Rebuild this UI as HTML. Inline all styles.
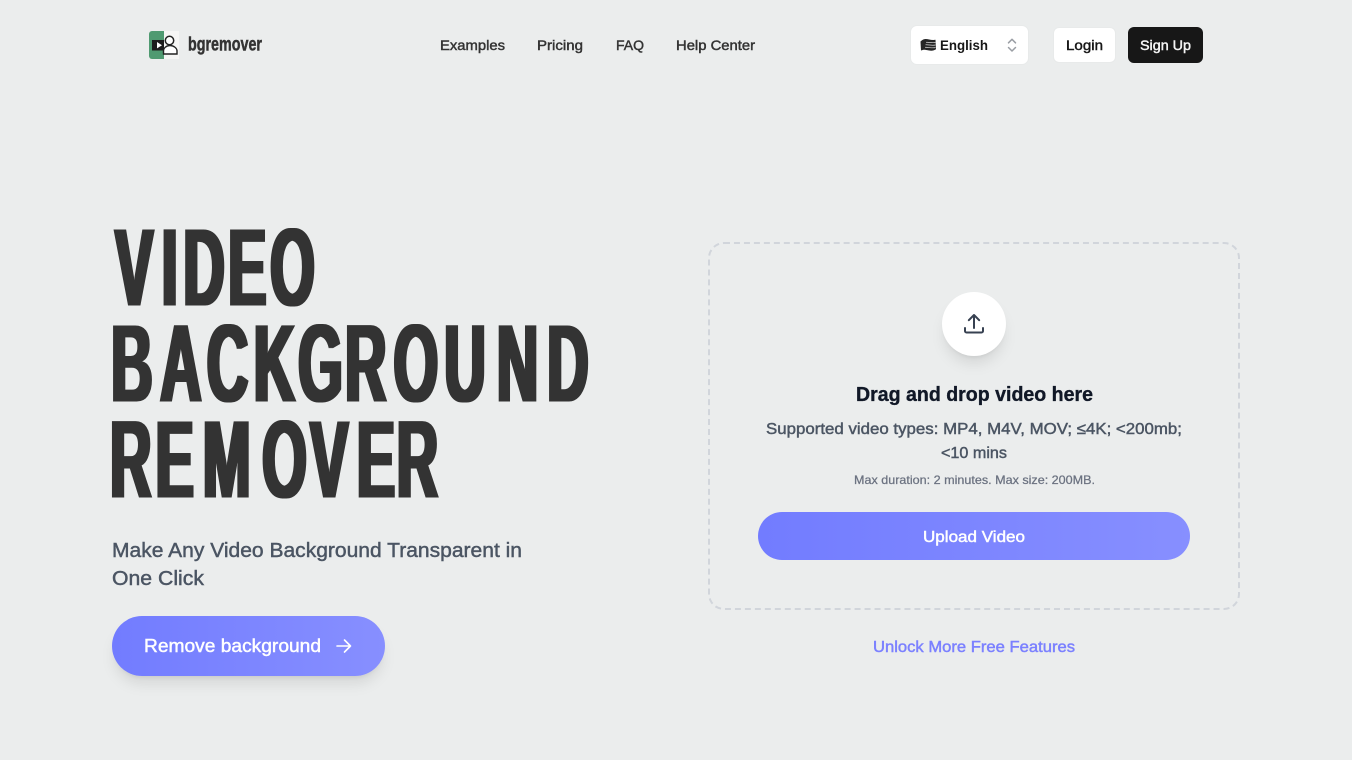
<!DOCTYPE html>
<html lang="en">
<head>
<meta charset="utf-8">
<title>bgremover - Video Background Remover</title>
<style>
html,body{margin:0;padding:0;width:1352px;height:760px;overflow:hidden;background:#ebeded}
body{position:relative;font-family:"Liberation Sans",sans-serif}
.box{position:absolute;box-sizing:border-box}
#lang{left:910px;top:25px;width:119px;height:40px;background:#fff;border:1px solid #e8eaea;border-radius:7px}
#login{left:1053px;top:27px;width:63px;height:36px;background:#fff;border:1px solid #e8eaea;border-radius:6px}
#signup{left:1128px;top:27px;width:75px;height:36px;background:#171717;border-radius:6px}
#drop{left:708px;top:242px;width:532px;height:368px;border:2px dashed #d1d5db;border-radius:16px}
#circle{left:942px;top:292px;width:64px;height:64px;background:#fff;border-radius:50%;box-shadow:0 10px 15px -3px rgba(0,0,0,.1),0 4px 6px -4px rgba(0,0,0,.1)}
#upload{left:758px;top:512px;width:432px;height:48px;border-radius:24px;background:linear-gradient(90deg,#727cff,#878fff)}
#remove{left:112px;top:616px;width:273px;height:60px;border-radius:30px;background:linear-gradient(90deg,#727cff,#878fff);box-shadow:0 10px 15px -3px rgba(0,0,0,.1),0 4px 6px -4px rgba(0,0,0,.1)}
svg{position:absolute;left:0;top:0}
text{font-family:"Liberation Sans",sans-serif}
.m{stroke-width:.45px}
</style>
</head>
<body>
<div class="box" id="lang"></div>
<div class="box" id="login"></div>
<div class="box" id="signup"></div>
<div class="box" id="drop"></div>
<div class="box" id="circle"></div>
<div class="box" id="upload"></div>
<div class="box" id="remove"></div>
<svg width="1352" height="760" viewBox="0 0 1352 760" xmlns="http://www.w3.org/2000/svg">
  <defs>
    <filter id="wide" filterUnits="userSpaceOnUse" x="100" y="210" width="510" height="300" color-interpolation-filters="sRGB">
      <feMorphology operator="dilate" radius="2 0"/>
    </filter>
  </defs>
  <!-- logo -->
  <rect x="163" y="31" width="16" height="28" fill="#f6f6f5"/>
  <path d="M152 31h12v28h-12a3 3 0 0 1-3-3V34a3 3 0 0 1 3-3z" fill="#4f9a71"/>
  <rect x="152" y="40" width="12" height="10.500" fill="#1c1c1c"/>
  <path d="M157 42l5 3.200-5 3.200z" fill="#fff"/>
  <path d="M163.500 54v-3c0-3 3-5.500 6.500-5.500s7 2.500 7 5.500v3z" fill="#fff" stroke="#222" stroke-width="1.400"/>
  <circle cx="169.500" cy="40.500" r="4.200" fill="#fff" stroke="#222" stroke-width="1.500"/>
  <text x="188" y="50.500" font-size="19.500" font-weight="700" fill="#333" stroke="#333" stroke-width=".5" textLength="74" lengthAdjust="spacingAndGlyphs">bgremover</text>

  <!-- nav -->
  <g font-size="14" fill="#333" stroke="#333">
    <text class="m" x="440" y="50" textLength="65" lengthAdjust="spacingAndGlyphs">Examples</text>
    <text class="m" x="537" y="50" textLength="46" lengthAdjust="spacingAndGlyphs">Pricing</text>
    <text class="m" x="616" y="50" textLength="28" lengthAdjust="spacingAndGlyphs">FAQ</text>
    <text class="m" x="676" y="50" textLength="79" lengthAdjust="spacingAndGlyphs">Help Center</text>
  </g>

  <!-- language -->
  <path d="M920.500 41.500c1-1 3-2.500 5-2.500 3 0 6 1.500 10 .8l.5 9.500c-3 2-6 1.500-9 .8s-4-.3-6 .4z" fill="#262626"/>
  <path d="M926 42.300c3-.2 6 .8 9.500.2M925.500 44.800c3.500-.2 6 1 10 .2M925 47.300c3.500-.2 6 1 10.500.3" stroke="#d8d8d8" stroke-width=".7" fill="none"/>
  <text x="940" y="50" font-size="14" font-weight="700" fill="#171717" textLength="48" lengthAdjust="spacingAndGlyphs">English</text>
  <path d="M1008.500 42.800l3.500-3.500 3.500 3.500M1008.500 47.500l3.500 3.500 3.500-3.500" fill="none" stroke="#9a9ea4" stroke-width="1.500" stroke-linecap="round" stroke-linejoin="round"/>

  <text x="1066" y="50" font-size="14" fill="#171717" stroke="#171717" class="m" textLength="37" lengthAdjust="spacingAndGlyphs">Login</text>
  <text x="1140" y="50" font-size="14" fill="#f5f5f5" stroke="#f5f5f5" class="m" textLength="51" lengthAdjust="spacingAndGlyphs">Sign Up</text>

  <!-- heading -->
  <g filter="url(#wide)">
    <g font-size="110" font-weight="700" fill="#333" transform="scale(.52 1)">
      <text x="221.3 311.1 352.7 438.9 519.7" y="305.500">VIDEO</text>
      <text x="213.9 308.1 397.9 488 573.6 663.6 756.9 854.5 955.5 1052.3" y="401.500">BACKGROUND</text>
      <text x="211.7 299.2 390.1 504.3 596.3 686.3 763" y="497.500">REMOVER</text>
    </g>
  </g>

  <g font-size="20" fill="#4b5563" stroke="#4b5563">
    <text class="m" x="112" y="557" textLength="410" lengthAdjust="spacingAndGlyphs">Make Any Video Background Transparent in</text>
    <text class="m" x="112" y="585" textLength="92" lengthAdjust="spacingAndGlyphs">One Click</text>
  </g>

  <text class="m" x="144" y="652" font-size="18" fill="#fff" stroke="#fff" textLength="177" lengthAdjust="spacingAndGlyphs">Remove background</text>
  <path d="M337 646h13.500M344.500 640l6 6-6 6" fill="none" stroke="#fff" stroke-width="1.600" stroke-linecap="round" stroke-linejoin="round"/>

  <!-- upload icon -->
  <path d="M974 328V315M968.800 320.200l5.200-5.200 5.200 5.200M965 328v3a1.500 1.500 0 0 0 1.500 1.500h15a1.500 1.500 0 0 0 1.500-1.500v-3" fill="none" stroke="#374151" stroke-width="2" stroke-linecap="round" stroke-linejoin="round"/>

  <text x="856" y="401" font-size="20" font-weight="700" fill="#111827" stroke="#111827" stroke-width=".35" textLength="237" lengthAdjust="spacingAndGlyphs">Drag and drop video here</text>
  <g font-size="16" fill="#4b5563" stroke="#4b5563">
    <text class="m" x="766" y="434" textLength="416" lengthAdjust="spacingAndGlyphs">Supported video types: MP4, M4V, MOV; ≤4K; &lt;200mb;</text>
    <text class="m" x="941" y="458" textLength="66" lengthAdjust="spacingAndGlyphs">&lt;10 mins</text>
  </g>
  <text x="854" y="484" font-size="12" fill="#6b7280" stroke="#6b7280" stroke-width=".25" textLength="241" lengthAdjust="spacingAndGlyphs">Max duration: 2 minutes. Max size: 200MB.</text>
  <text class="m" x="923" y="542" font-size="16" fill="#fff" stroke="#fff" textLength="102" lengthAdjust="spacingAndGlyphs">Upload Video</text>
  <text class="m" x="873" y="652" font-size="16" fill="#7b80ff" stroke="#7b80ff" textLength="202" lengthAdjust="spacingAndGlyphs">Unlock More Free Features</text>
</svg>
</body>
</html>
